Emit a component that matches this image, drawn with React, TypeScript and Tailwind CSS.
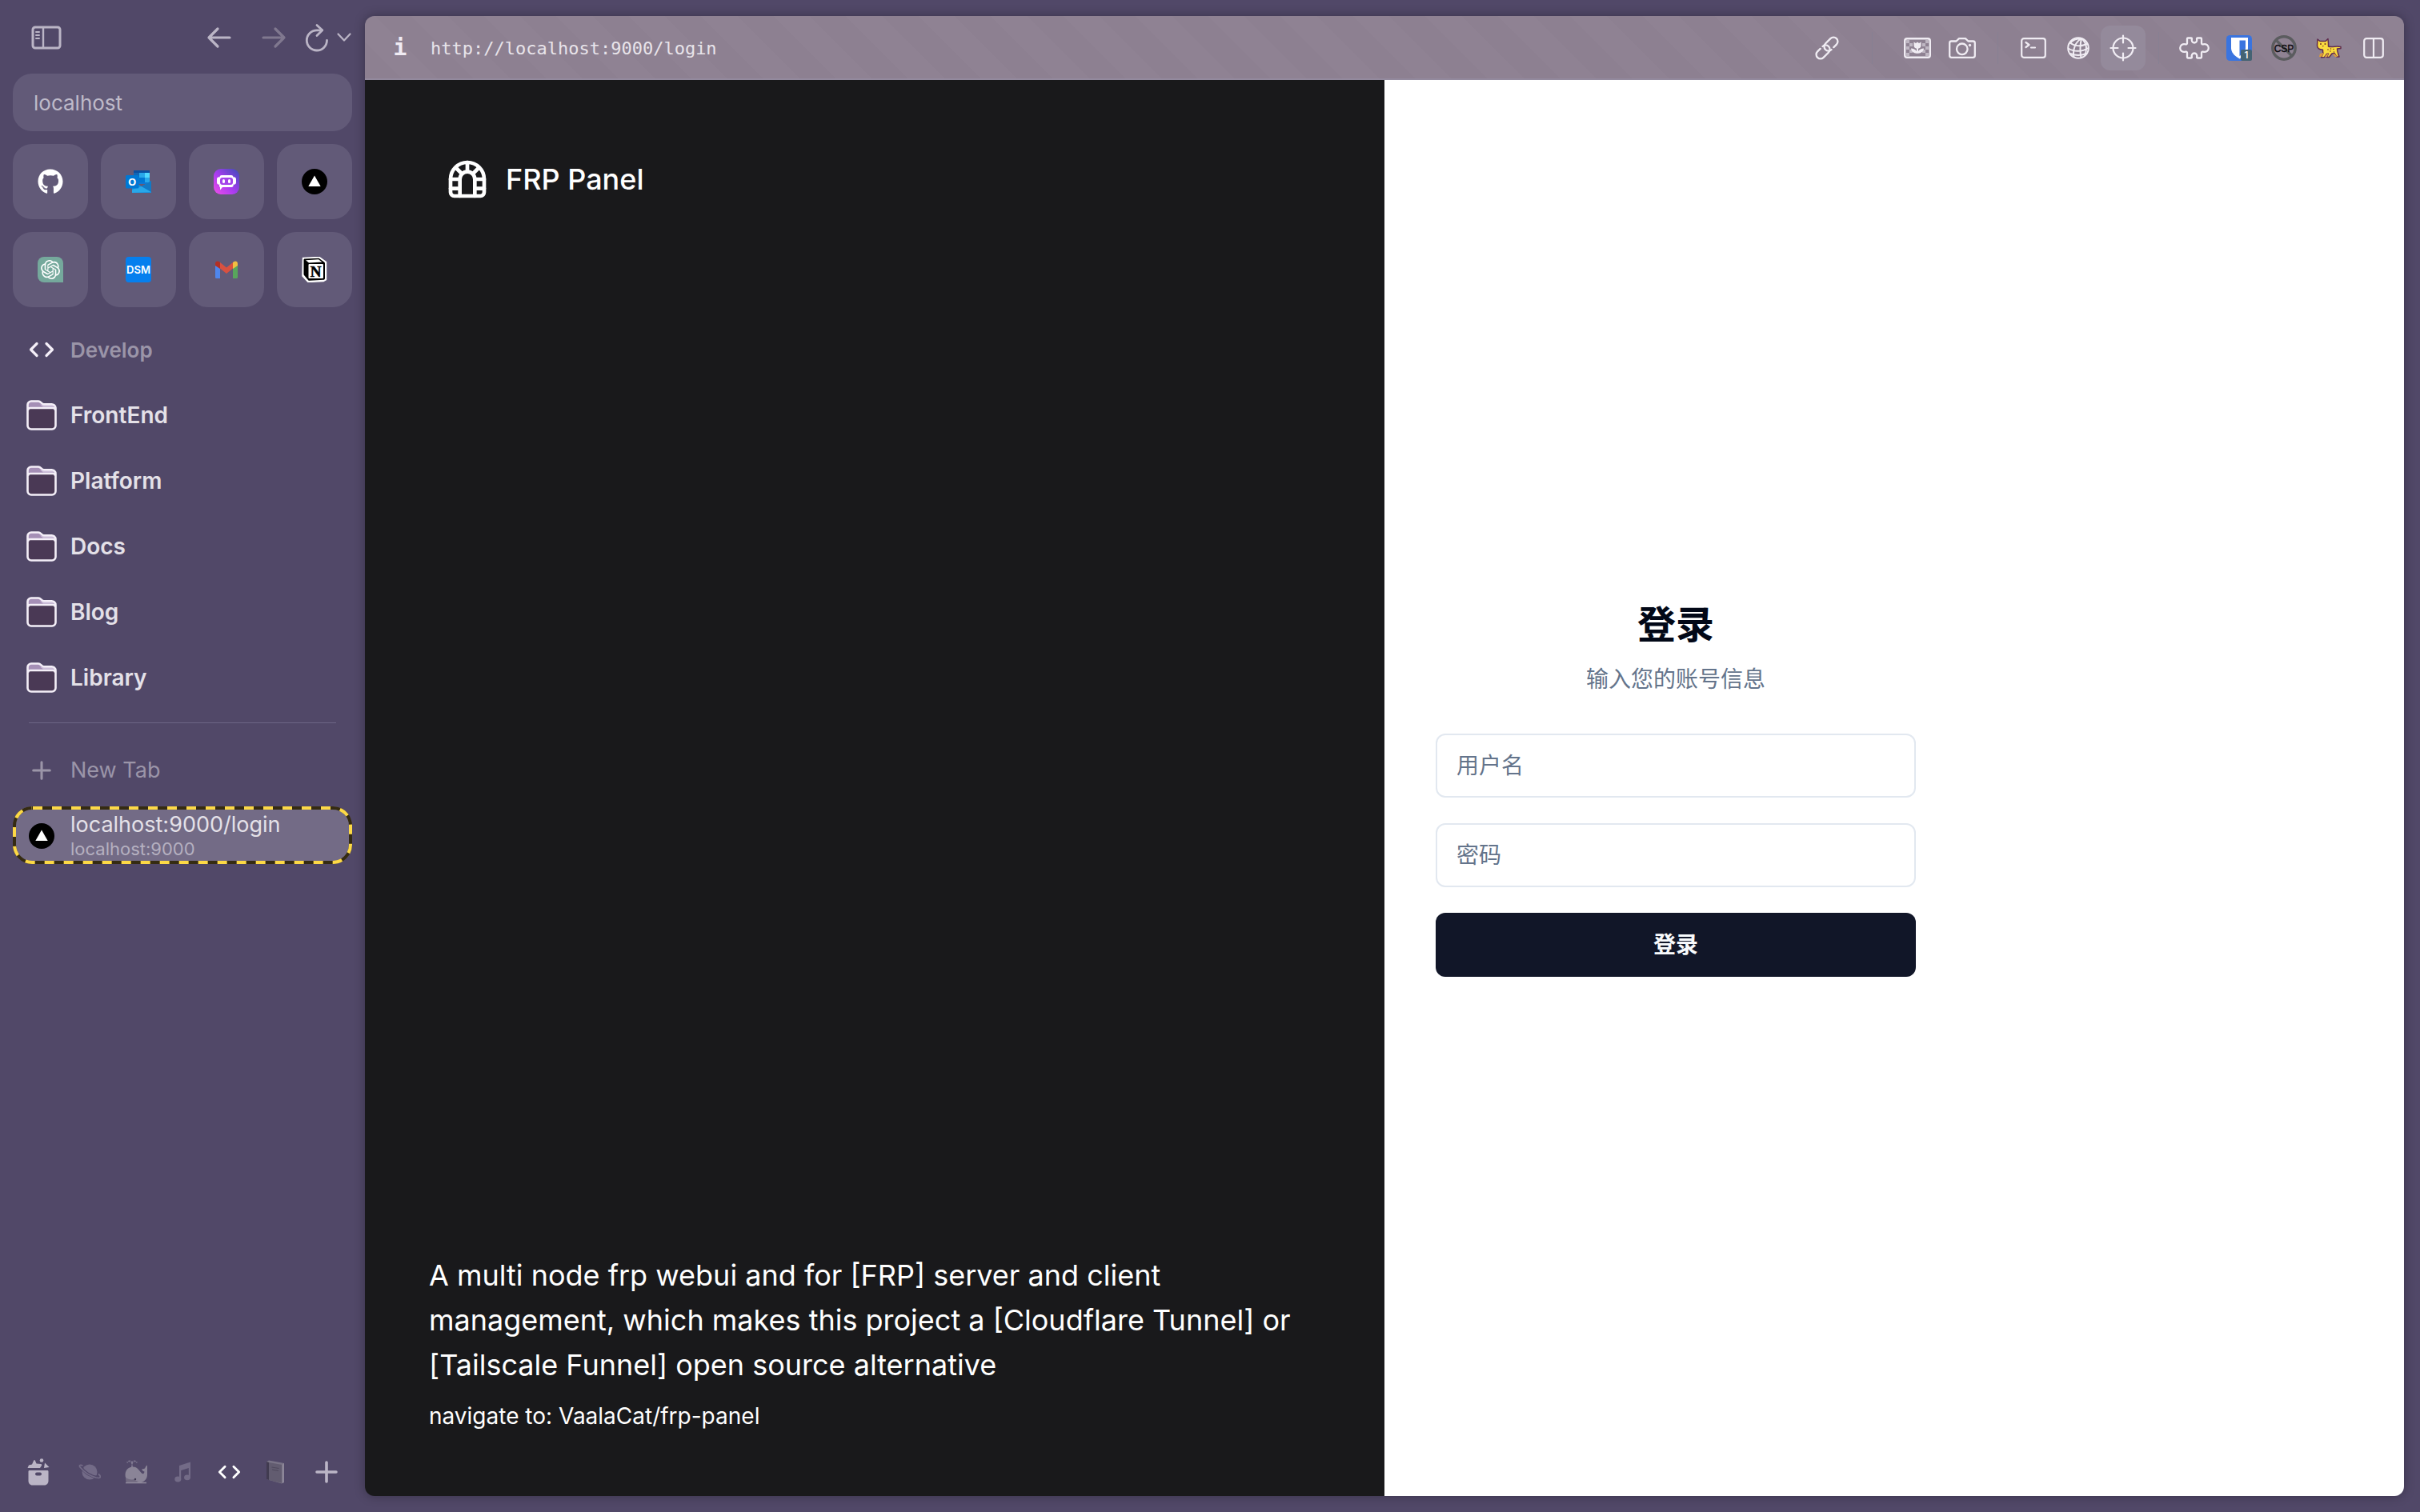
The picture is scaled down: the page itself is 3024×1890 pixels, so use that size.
import type { ReactNode } from 'react';
import { SiOpenai } from 'react-icons/si';
import { FaGithub } from 'react-icons/fa';
import { TbBuildingTunnel } from 'react-icons/tb';

type IconProps = {
  className?: string;
};

function SidebarIcon() {
  return (
    <svg viewBox="0 0 38 30" className="h-[30px] w-[38px]" fill="none" stroke="currentColor">
      <rect x="2" y="2" width="34" height="26" rx="3" strokeWidth="3" />
      <path d="M15 2v26" strokeWidth="2.4" />
      <path d="M6 8h4M6 12h4M6 16h4" strokeWidth="2" strokeLinecap="round" />
    </svg>
  );
}

function ArrowIcon({ className }: IconProps) {
  return (
    <svg viewBox="0 0 32 28" className={className} fill="none" stroke="currentColor" strokeWidth="3.2" strokeLinecap="round" strokeLinejoin="round">
      <path d="M29 14H3M14 3L3 14l11 11" />
    </svg>
  );
}

function ReloadIcon() {
  return (
    <svg viewBox="0 0 30 36" className="h-9 w-[30px]" fill="none" stroke="currentColor" strokeWidth="2.8" strokeLinecap="round" strokeLinejoin="round">
      <path d="M27.500 21.500A12.600 12.600 0 1 1 15 8.800h6.500" />
      <path d="M15 2.500l6.800 6.300L15 15.500" />
    </svg>
  );
}

function ChevronIcon() {
  return (
    <svg viewBox="0 0 20 14" className="h-3.5 w-5" fill="none" stroke="currentColor" strokeWidth="2.2" strokeLinecap="round" strokeLinejoin="round">
      <path d="M2.500 2.500L10 10.500l7.500-8" />
    </svg>
  );
}

function CodeIcon({ className }: IconProps) {
  return (
    <svg viewBox="0 0 32 20" className={className} fill="none" stroke="currentColor" strokeWidth="3.2" strokeLinecap="round" strokeLinejoin="round">
      <path d="M10 2.500L2.500 10l7.500 7.500M22 2.500l7.500 7.500L22 17.500" />
    </svg>
  );
}

function PlusIcon({ className }: IconProps) {
  return (
    <svg viewBox="0 0 28 28" className={className} fill="none" stroke="currentColor" strokeWidth="3.600" strokeLinecap="round">
      <path d="M14 2v24M2 14h24" />
    </svg>
  );
}

function FolderIcon() {
  return (
    <svg viewBox="0 0 38 38" className="size-[38px]">
      <path d="M2 10V6a4 4 0 0 1 4-4h9c3 0 4 3.500 7 3.500h9a5 5 0 0 1 5 5" fill="#a58fb6" />
      <path d="M17 5.500h14a5 5 0 0 1 4 3H21z" fill="#cdbfda" />
      <rect x="2" y="10" width="34" height="26" rx="4" fill="#4a3955" />
      <path
        d="M1.500 10.500V6a4.500 4.500 0 0 1 4.500-4.500h9c3 0 4 3.800 7 3.800h9a5 5 0 0 1 5.500 5V32a4.500 4.500 0 0 1-4.500 4.500H6A4.500 4.500 0 0 1 1.500 32zM2 12.500a3 3 0 0 1 3-2.500h28a3 3 0 0 1 3 2.500"
        fill="none"
        stroke="#f4eff8"
        strokeWidth="2.600"
      />
    </svg>
  );
}

function OutlookIcon() {
  return (
    <svg viewBox="0 0 32 32" className="size-8">
      <path d="M10 2h20v17H10z" fill="#0f78d4" />
      <path d="M10 2h20v3H10z" fill="#0a4fa0" />
      <path d="M10 5h7v6h-7z" fill="#1066b5" />
      <path d="M17 5h7v6h-7z" fill="#28a8ea" />
      <path d="M24 5h6v6h-6z" fill="#50d9ff" />
      <path d="M17 11h7v6h-7z" fill="#0078d4" />
      <path d="M24 11h6v6h-6z" fill="#28a8ea" />
      <path d="M8 15l12 7 12-7v15H8z" fill="#1490df" />
      <path d="M8 30l24-1-12-7-12 4z" fill="#28a8ea" />
      <path d="M32 15v14l-12-7z" fill="#1279c4" />
      <rect y="8" width="16.500" height="16.500" rx="1.500" fill="#0078d4" />
      <text x="8.200" y="21" fontSize="13" fontWeight="700" textAnchor="middle" fill="#fff" fontFamily="Open Sans, sans-serif">
        O
      </text>
    </svg>
  );
}

function PoeIcon() {
  return (
    <svg viewBox="0 0 32 32" className="size-8">
      <defs>
        <linearGradient id="poe" x1="0" y1="1" x2="1" y2="0">
          <stop offset="0" stopColor="#f04fe8" />
          <stop offset=".45" stopColor="#a93cf0" />
          <stop offset="1" stopColor="#3d4cb8" />
        </linearGradient>
      </defs>
      <rect width="32" height="32" rx="9" fill="url(#poe)" />
      <path
        d="M10 8h12a2.500 2.500 0 0 1 2.500 2.500A2.500 2.500 0 0 1 28 13v4a2.500 2.500 0 0 1-3.500 2.500A2.500 2.500 0 0 1 22 23H11l-3 3.500V23a2.500 2.500 0 0 1-.5-3.500A2.500 2.500 0 0 1 4 17v-4a2.500 2.500 0 0 1 3.500-2.500A2.500 2.500 0 0 1 10 8z"
        fill="#fff"
      />
      <rect x="8" y="11" width="16" height="9" rx="3" fill="#a445ea" />
      <rect x="11" y="13" width="3" height="5" rx="1.500" fill="#fff" />
      <rect x="18" y="13" width="3" height="5" rx="1.500" fill="#fff" />
    </svg>
  );
}

function VercelIcon() {
  return (
    <svg viewBox="0 0 32 32" className="size-8">
      <circle cx="16" cy="16" r="16" fill="#000" />
      <path d="M16 8.500L23.700 22H8.300z" fill="#fff" />
    </svg>
  );
}

function GmailIcon() {
  return (
    <svg viewBox="0 0 32 32" className="size-8">
      <path d="M2 10v15.500A1.500 1.500 0 0 0 3.500 27H8V13z" fill="#4f86ec" />
      <path d="M30 10v15.500a1.500 1.500 0 0 1-1.500 1.500H24V13z" fill="#58a65c" />
      <path d="M8 14.500V7l8 6.500L24 7v7.500l-8 6.500z" fill="#d85140" />
      <path d="M2 11V8.500C2 5.500 5 4.600 7 6.200L8 7v8z" fill="#b33024" />
      <path d="M30 11V8.500c0-3-3-3.900-5-2.300L24 7v8z" fill="#f1be42" />
    </svg>
  );
}

function NotionIcon() {
  return (
    <svg viewBox="0 0 32 32" className="size-8">
      <path d="M1.500 1.500L22 .500l8.500 6v22L27 30.500 8 31.500 1 24z" fill="#fff" stroke="#fff" strokeLinejoin="round" strokeWidth="1.500" />
      <path d="M2.500 4C2.500 3 3 2.500 4 2.500L21.500 1.800 28 6.500c.8.500 1 1 1 1.800v18.500c0 1.400-.7 2-1.800 2L10 29.800c-1 0-1.500 0-2-.8L3 23c-.5-.7-.5-1-.5-2z" fill="#000" />
      <path d="M5 4.300l16-1 4.500 3.200-16.500 1z" fill="#fff" />
      <rect x="8.500" y="9" width="18.500" height="18" rx="1" fill="#fff" />
      <text
        x="17.500"
        y="24.500"
        fontSize="19"
        fontWeight="700"
        textAnchor="middle"
        fill="#000"
        stroke="#000"
        strokeWidth=".6"
        fontFamily="Liberation Serif, serif"
      >
        N
      </text>
    </svg>
  );
}

function ArchiveIcon() {
  return (
    <svg viewBox="0 0 28 34" className="h-[34px] w-7" fill="currentColor">
      <path d="M.500 12L2 8.500l4-1L8 3c.6-1.200 1.400-1.200 2 0l1.500 3.500L17 7c1.500.2 1.500 1.500.8 2.300L16 12z" />
      <circle cx="18" cy="2.500" r="2.300" />
      <path d="M22 5.500l5.500 5.500-6.500 1z" />
      <path fillRule="evenodd" d="M3 15h22c1 0 1.500.5 1.500 1.500V28c0 3-2 5.500-5 5.500h-15c-3 0-5-2.500-5-5.500V16.500C1.500 15.500 2 15 3 15zm9 2.500a2 2 0 0 0 0 4h4a2 2 0 0 0 0-4z" />
    </svg>
  );
}

function PlanetIcon() {
  return (
    <svg viewBox="0 0 28 20" className="h-5 w-7">
      <circle cx="14" cy="10" r="9.500" fill="#736b87" />
      <path d="M3 3.500c4 7 13 12.500 21 13" fill="none" stroke="#514868" strokeWidth="3.500" />
      <path d="M5.500 2C1.500.5 0 2 3 5c5 6 12 10 19 12 6 1.500 7-1 3-4.500" fill="none" stroke="#736b87" strokeWidth="1.700" />
    </svg>
  );
}

function WhaleIcon() {
  return (
    <svg viewBox="0 0 28 30" className="h-[30px] w-7">
      <path d="M9 9V4M9 4C8 0 4 1 3 3.500M9 4c1-4 5-3 6-.5" fill="none" stroke="#7f7891" strokeWidth="1.800" strokeDasharray="2.500 1" />
      <path d="M.500 18C1 12 5 8.500 10 8.500c6 0 8 5 11 8 2 1.500 3 .5 3.500-2-2-.5-3.500-1.500-3-3.500 2 .5 3.500 0 4-1.500.500-1.500 1.500-2.500 2.500-3V18c0 6-4 10.500-12 10.500S0 26 .500 18z" fill="#8a8497" />
      <path d="M1 22c3 2 7 3 11 2 1 2 3 2.500 5 2.500l-3 2.500H3C1 27 1 25 1 22z" fill="#716a80" />
      <path d="M1 28.500h26" stroke="#8f899c" strokeWidth="1.600" />
      <circle cx="13" cy="24" r="1.200" fill="#3f3850" />
    </svg>
  );
}

function MusicIcon() {
  return (
    <svg viewBox="0 0 20 26" className="h-[26px] w-5" fill="#736b87">
      <path d="M6 5l14-4.500V20h-2.200V8L8.200 11v11H6z" />
      <ellipse cx="4.300" cy="22" rx="4" ry="3.400" />
      <ellipse cx="16" cy="19.800" rx="4" ry="3.400" />
    </svg>
  );
}

function BookIcon() {
  return (
    <svg viewBox="0 0 24 30" className="h-[30px] w-6">
      <path d="M1 2l3-1.500L23 4v24l-3 1.500L1 24z" fill="#7a7487" />
      <path d="M1 2l3 1v22l-3-1z" fill="#413b50" />
      <path d="M4 3l16.500 3v23L4 25z" fill="#625c70" />
      <path d="M20.500 6L23 4v24l-2.500 1z" fill="#8d8799" />
      <path d="M7.500 9l9 1.500M8 12l8 1.500" stroke="#4f495d" strokeWidth="1.200" />
    </svg>
  );
}

function LinkIcon() {
  return (
    <svg viewBox="-16 -16 32 32" className="size-8" fill="none" stroke="currentColor" strokeWidth="2.300" strokeLinecap="round">
      <path d="M6.500 5.300H11.500a5.300 5.300 0 0 0 0-10.600H2.500a5.300 5.300 0 0 0 0 10.600" transform="rotate(-45)" />
      <path d="M6.500 5.300H11.500a5.300 5.300 0 0 0 0-10.600H2.500a5.300 5.300 0 0 0 0 10.600" transform="rotate(135)" />
    </svg>
  );
}

function PictureIcon() {
  return (
    <svg viewBox="0 0 34 26" className="h-[26px] w-[34px]">
      <g fill="currentColor" opacity=".5">
        <path d="M3 3h4v4H3zM7 7h4v4H7zM3 11h4v4H3zM7 15h4v4H7zM3 19h4v4H3zM27 3h4v4h-4zM23 7h4v4h-4zM27 11h4v4h-4zM23 15h4v4h-4zM27 19h4v4h-4z" />
      </g>
      <rect x="1.200" y="1.200" width="31.600" height="23.600" rx="2.800" fill="none" stroke="currentColor" strokeWidth="2.400" />
      <path d="M12.500 5.500l2.500 1.500 2-1.500 2 1.500 2.500-1.500v4c0 2.500-1.500 4-3.500 4.300V17c1.500-2 4-3.500 7-3.500-.500 4-3.500 6-7 6.300h-2c-3.500-.3-6.500-2.300-7-6.300 3 0 5.500 1.500 7 3.500v-3.200c-2-.3-3.500-1.800-3.500-4.300z" fill="currentColor" />
    </svg>
  );
}

function CameraIcon() {
  return (
    <svg viewBox="0 0 34 26" className="h-[26px] w-[34px]" fill="none" stroke="currentColor" strokeWidth="2.300" strokeLinejoin="round">
      <path d="M3.500 4.500h6L13 1.200h8l3.500 3.300h6a2.300 2.300 0 0 1 2.300 2.300v15.700a2.300 2.300 0 0 1-2.300 2.300h-27a2.300 2.300 0 0 1-2.300-2.300V6.800a2.300 2.300 0 0 1 2.300-2.300z" />
      <circle cx="16.800" cy="14.300" r="6.800" />
      <circle cx="26.500" cy="9.500" r="1.700" fill="currentColor" stroke="none" />
    </svg>
  );
}

function TerminalIcon() {
  return (
    <svg viewBox="0 0 32 26" className="h-[26px] w-8" fill="none" stroke="currentColor" strokeWidth="2.200" strokeLinecap="round" strokeLinejoin="round">
      <rect x="1.200" y="1.200" width="29.600" height="23.600" rx="2.800" />
      <path d="M6.500 6l4 3-4 3M13 12.500h5" />
    </svg>
  );
}

function GlobeIcon() {
  return (
    <svg viewBox="0 0 28 28" className="size-7" fill="none" stroke="currentColor" strokeWidth="2">
      <circle cx="14" cy="14" r="12.800" />
      <path d="M18 2C11 6 6.500 15 8.500 25.500M18 2c-1.500 6-2 16-.5 24.500M18 2c6 5 7.500 13 4 22M18 2C11 2 6 5 3 8.500" />
      <path d="M3.500 7c5 5 14 5.500 22 1.500M1.500 14.500c7 4.500 17 4.500 25-.5M4 21c6 2.500 14 2.500 20 0" />
    </svg>
  );
}

function CrosshairIcon() {
  return (
    <svg viewBox="0 0 34 34" className="size-[34px]" fill="none" stroke="currentColor" strokeWidth="2.200" strokeLinecap="round">
      <circle cx="17" cy="17" r="12.500" />
      <path d="M17 1.500v9M17 23.500v9M1.500 17h9M23.500 17h9" />
    </svg>
  );
}

function PuzzleIcon() {
  return (
    <svg viewBox="0 0 38 28" className="h-7 w-[38px]" fill="none" stroke="currentColor" strokeWidth="2.300" strokeLinejoin="round">
      <path d="M10 2.500c0-.7.500-1 1-1h4c.7 0 1 .5 1 1-1 2.500.500 5 3 5s4-2.500 3-5c0-.5.300-1 1-1h4c.500 0 1 .3 1 1V8c0 1.200 1 1.500 2 1.300 4-1 6.800 1.700 6.800 4.700s-2.800 5.700-6.800 4.700c-1-.2-2 .1-2 1.300v5.500c0 .7-.5 1-1 1h-4c-.7 0-1-.5-1-1 1-2.500-.5-5-3-5s-4 2.500-3 5c0 .5-.3 1-1 1h-4c-.5 0-1-.3-1-1V20c0-1.200-1-1.500-2-1.300-4 1-6.800-1.700-6.800-4.700S4 8.300 8 9.300c1 .2 2-.1 2-1.300z" />
    </svg>
  );
}

function BitwardenIcon() {
  return (
    <span className="relative block size-8">
      <svg viewBox="0 0 32 32" className="size-8">
        <rect width="32" height="32" rx="4.500" fill="#3a74df" />
        <path d="M6 3h21v13c0 6-5 10.500-10.500 13.500C11 26.500 6 22 6 16z" fill="#fff" />
        <path d="M16.500 6.500H24V16c0 4-3.500 7.500-7.500 10z" fill="#3a74df" />
      </svg>
      <span className="absolute right-0 bottom-0 flex h-[14px] w-[14px] items-center justify-center rounded-xs bg-[#456373] text-[12px] leading-none font-medium text-white">
        1
      </span>
    </span>
  );
}

function CspIcon() {
  return (
    <svg viewBox="0 0 32 32" className="size-8">
      <circle cx="16" cy="16" r="14.200" fill="none" stroke="#5b5c5f" strokeWidth="3.400" />
      <path d="M6 6l20 20" stroke="#5b5c5f" strokeWidth="3.400" />
      <text x="16" y="21" fontSize="12" textAnchor="middle" fill="#0c0b10" stroke="#0c0b10" strokeWidth=".4" fontFamily="Liberation Sans, sans-serif">
        CSP
      </text>
    </svg>
  );
}

function LeopardIcon() {
  return (
    <svg viewBox="0 0 32 26" className="h-[26px] w-8">
      <path
        d="M2 2l3 2.500h7L15 1.500l.5 6V11c2 .8 5 .5 8 .2 3-.2 5-.2 7.500.3v2c-1.500.500-3 .2-4.500.5 0 2 .500 4 1.500 7l1 3h-3l-3-4.500-3 .5-3.500 4.500h-3l2-4.500-2 .5-3 4-4 .2 2.500-5c-.5-2-.5-3-.5-4.500C4 15 1.500 13.500 1.500 10z"
        fill="#fbdc3e"
        stroke="#5f2b4f"
        strokeWidth="1.500"
        strokeLinejoin="round"
      />
      <path d="M5 20l5-1-3 5H4zM12 22l4-3-2 5h-3zM23 20l4 4h-3l-3-3z" fill="#dc9a3e" />
      <g fill="#7a3a2c">
        <circle cx="6" cy="8" r="1.100" />
        <circle cx="11.500" cy="8" r="1.100" />
        <path d="M7.500 10h2.500l-1.200 1.500z" />
        <circle cx="15" cy="15" r=".8" />
        <circle cx="18.500" cy="14" r=".8" />
        <circle cx="18" cy="17" r=".8" />
        <circle cx="22" cy="14.500" r=".8" />
        <circle cx="22.500" cy="18" r=".8" />
      </g>
    </svg>
  );
}

function SplitIcon() {
  return (
    <svg viewBox="0 0 26 26" className="size-[26px]" fill="none" stroke="currentColor" strokeWidth="2.200">
      <rect x="1.200" y="1.200" width="23.600" height="23.600" rx="3" />
      <path d="M13 1v24" />
    </svg>
  );
}

const pinned = [
  { name: 'GitHub', icon: <FaGithub className="size-8 text-white" /> },
  { name: 'Outlook', icon: <OutlookIcon /> },
  { name: 'Poe', icon: <PoeIcon /> },
  { name: 'Vercel', icon: <VercelIcon /> },
  {
    name: 'ChatGPT',
    icon: (
      <span className="flex size-8 items-center justify-center rounded-lg rounded-br-none bg-[#75a99c]">
        <SiOpenai className="size-6 text-white" />
      </span>
    ),
  },
  {
    name: 'Synology',
    icon: (
      <span className="flex size-8 items-center justify-center rounded-sm bg-[#057fee] text-[13px] leading-none font-semibold text-white">
        DSM
      </span>
    ),
  },
  { name: 'Gmail', icon: <GmailIcon /> },
  { name: 'Notion', icon: <NotionIcon /> },
];

const folders = ['FrontEnd', 'Platform', 'Docs', 'Blog', 'Library'];

const spaces = [
  { name: 'Planet', icon: <PlanetIcon /> },
  { name: 'Whale', icon: <WhaleIcon /> },
  { name: 'Music', icon: <MusicIcon /> },
  { name: 'Develop', icon: <CodeIcon className="h-[18px] w-[29px] text-white" /> },
  { name: 'Book', icon: <BookIcon /> },
];

function SidebarRow({ icon, children, className }: { icon: ReactNode; children: ReactNode; className: string }) {
  return (
    <button
      type="button"
      className={`flex h-18 w-full items-center gap-4 pl-4 text-left ${className}`}
    >
      <span className="flex w-10 justify-center">{icon}</span>
      {children}
    </button>
  );
}

function Sidebar() {
  return (
    <aside className="flex w-114 shrink-0 flex-col px-4 text-[#bbb5c6]">
      <div className="flex h-23 items-center pt-0.5">
        <button type="button" aria-label="Toggle sidebar" className="ml-3.5 flex size-14 items-center justify-center">
          <SidebarIcon />
        </button>
        <button type="button" aria-label="Back" className="ml-auto flex size-14 items-center justify-center">
          <ArrowIcon className="h-7 w-8" />
        </button>
        <button type="button" aria-label="Forward" className="ml-3 flex size-14 items-center justify-center text-[#80788f]">
          <ArrowIcon className="h-7 w-8 rotate-180" />
        </button>
        <button type="button" aria-label="Reload" className="ml-0.5 flex size-12 items-center justify-center">
          <ReloadIcon />
        </button>
        <button type="button" aria-label="History" className="flex h-12 w-5 items-center justify-center">
          <ChevronIcon />
        </button>
      </div>

      <input
        aria-label="Address"
        defaultValue="localhost"
        className="h-18 w-full rounded-3xl bg-[#625a78] px-[26px] text-[26px] text-[#bfbac9] outline-none"
      />

      <nav className="mt-4 grid grid-cols-4 gap-4">
        {pinned.map(({ name, icon }) => (
          <a
            key={name}
            href="#"
            aria-label={name}
            className="flex h-[94px] items-center justify-center rounded-3xl bg-[#625a78]"
          >
            {icon}
          </a>
        ))}
      </nav>

      <div className="mt-[17px] flex flex-col gap-2.5">
        <SidebarRow icon={<CodeIcon className="h-5 w-8 text-[#f4eff8]" />} className="text-[26px] font-semibold text-[#9b95a8]">
          Develop
        </SidebarRow>
        {folders.map((folder) => (
          <SidebarRow key={folder} icon={<FolderIcon />} className="text-[28px] font-semibold text-[#e4e1e8]">
            {folder}
          </SidebarRow>
        ))}
      </div>

      <hr className="mx-5 mt-5 mb-[23px] border-t border-[#6c6485]" />

      <SidebarRow icon={<PlusIcon className="size-6" />} className="text-[27px] text-[#9b95a8]">
        New Tab
      </SidebarRow>

      <div className="relative mt-[9px]">
        <button type="button" className="flex h-18 w-full items-center gap-4 rounded-3xl bg-[#736b86] pt-0.5 pl-4 text-left">
          <span className="flex w-10 justify-center">
            <VercelIcon />
          </span>
          <span className="flex flex-col">
            <span className="text-[27px] leading-8 text-[#e4e1e8]">localhost:9000/login</span>
            <span className="text-[22px] leading-7 text-[#b5b0c0]">localhost:9000</span>
          </span>
        </button>
        <svg viewBox="0 0 424 72" className="pointer-events-none absolute inset-0 size-full" fill="none" strokeWidth="4">
          <rect x="2" y="2" width="420" height="68" rx="22" stroke="#352b12" />
          <rect x="2" y="2" width="420" height="68" rx="22" stroke="#fdd946" strokeDasharray="12 12" strokeDashoffset="-1" />
        </svg>
      </div>

      <div className="mt-auto mb-5 flex h-15 items-center justify-between px-[3px]">
        <button type="button" aria-label="Library" className="flex h-15 w-[58px] items-center justify-center">
          <ArchiveIcon />
        </button>
        <div className="flex">
          {spaces.map(({ name, icon }) => (
            <button key={name} type="button" aria-label={name} className="flex h-15 w-[58px] items-center justify-center">
              {icon}
            </button>
          ))}
        </div>
        <button type="button" aria-label="New" className="flex h-15 w-[58px] items-center justify-center">
          <PlusIcon className="size-7" />
        </button>
      </div>
    </aside>
  );
}

function ToolButton({ label, active, children }: { label: string; active?: boolean; children: ReactNode }) {
  return (
    <button
      type="button"
      aria-label={label}
      className={`flex size-14 items-center justify-center rounded-xl ${active ? 'bg-[#948a9b]' : ''}`}
    >
      {children}
    </button>
  );
}

function Toolbar() {
  return (
    <header className="flex h-20 shrink-0 items-center border-b-2 border-[#938a9e] bg-[repeating-linear-gradient(45deg,#8d8091_0_32px,#8f8293_32px_64px)] pt-0.5 pr-2.5 pl-4 text-[#f0ecf3]">
      <button type="button" aria-label="Site information" className="flex size-14 items-center justify-center font-['DejaVu_Sans_Mono',monospace] text-[28px] font-bold">
        i
      </button>
      <span className="ml-2.5 font-['DejaVu_Sans_Mono',monospace] text-[22px] text-[#e8e4ea]">http://localhost:9000/login</span>

      <div className="ml-auto flex items-center">
        <ToolButton label="Copy link">
          <LinkIcon />
        </ToolButton>
        <span className="mx-7 h-10 w-px bg-[#878093]" />
        <ToolButton label="Pictures">
          <PictureIcon />
        </ToolButton>
        <ToolButton label="Capture">
          <CameraIcon />
        </ToolButton>
        <span className="mx-4 h-10 w-px bg-[#878093]" />
        <ToolButton label="Console">
          <TerminalIcon />
        </ToolButton>
        <ToolButton label="Network">
          <GlobeIcon />
        </ToolButton>
        <ToolButton label="Inspect" active>
          <CrosshairIcon />
        </ToolButton>
        <span className="mx-4 h-10 w-px bg-[#878093]" />
        <ToolButton label="Extensions">
          <PuzzleIcon />
        </ToolButton>
        <ToolButton label="Bitwarden">
          <BitwardenIcon />
        </ToolButton>
        <ToolButton label="CSP">
          <CspIcon />
        </ToolButton>
        <ToolButton label="Leopard">
          <LeopardIcon />
        </ToolButton>
        <ToolButton label="Split view">
          <SplitIcon />
        </ToolButton>
      </div>
    </header>
  );
}

function LoginForm() {
  return (
    <form className="flex w-[600px] flex-col gap-8 font-['Inter','Noto_Sans_CJK_SC',sans-serif] text-[28px]">
      <div className="mb-4 flex flex-col gap-4 text-center">
        <h1 className="text-5xl leading-16 font-semibold text-[#020817]">登录</h1>
        <p className="leading-10 text-[#64748b]">输入您的账号信息</p>
      </div>
      <input
        type="text"
        aria-label="用户名"
        placeholder="用户名"
        className="h-20 w-full rounded-xl border-2 border-[#e2e8f0] px-6 outline-none placeholder:text-[#64748b]"
      />
      <input
        type="password"
        aria-label="密码"
        placeholder="密码"
        className="h-20 w-full rounded-xl border-2 border-[#e2e8f0] px-6 outline-none placeholder:text-[#64748b]"
      />
      <button type="submit" className="h-20 w-full rounded-xl bg-[#111628] font-semibold text-[#f8fafc]">
        登录
      </button>
    </form>
  );
}

export default function App() {
  return (
    <div className="flex min-h-screen bg-[#514868] font-['Inter',sans-serif]">
      <Sidebar />
      <div className="flex flex-1 py-5 pr-5">
        <div className="flex flex-1 flex-col overflow-hidden rounded-xl shadow-[0_0_14px_rgba(0,0,0,0.3)]">
          <Toolbar />
          <main className="grid flex-1 grid-cols-2">
            <section className="flex flex-col justify-between bg-[#19191b] p-20 text-white">
              <div className="flex h-22 items-center gap-5 pl-5 text-4xl font-medium">
                <TbBuildingTunnel className="size-14" />
                FRP Panel
              </div>
              <div className="flex flex-col gap-4">
                <p className="text-4xl leading-14">
                  A multi node frp webui and for [FRP] server and client management, which makes this project a [Cloudflare Tunnel] or
                  [Tailscale Funnel] open source alternative
                </p>
                <p className="text-[28px] leading-10">
                  navigate to: <a href="#">VaalaCat/frp-panel</a>
                </p>
              </div>
            </section>
            <section className="flex items-center bg-white pl-16">
              <LoginForm />
            </section>
          </main>
        </div>
      </div>
    </div>
  );
}
